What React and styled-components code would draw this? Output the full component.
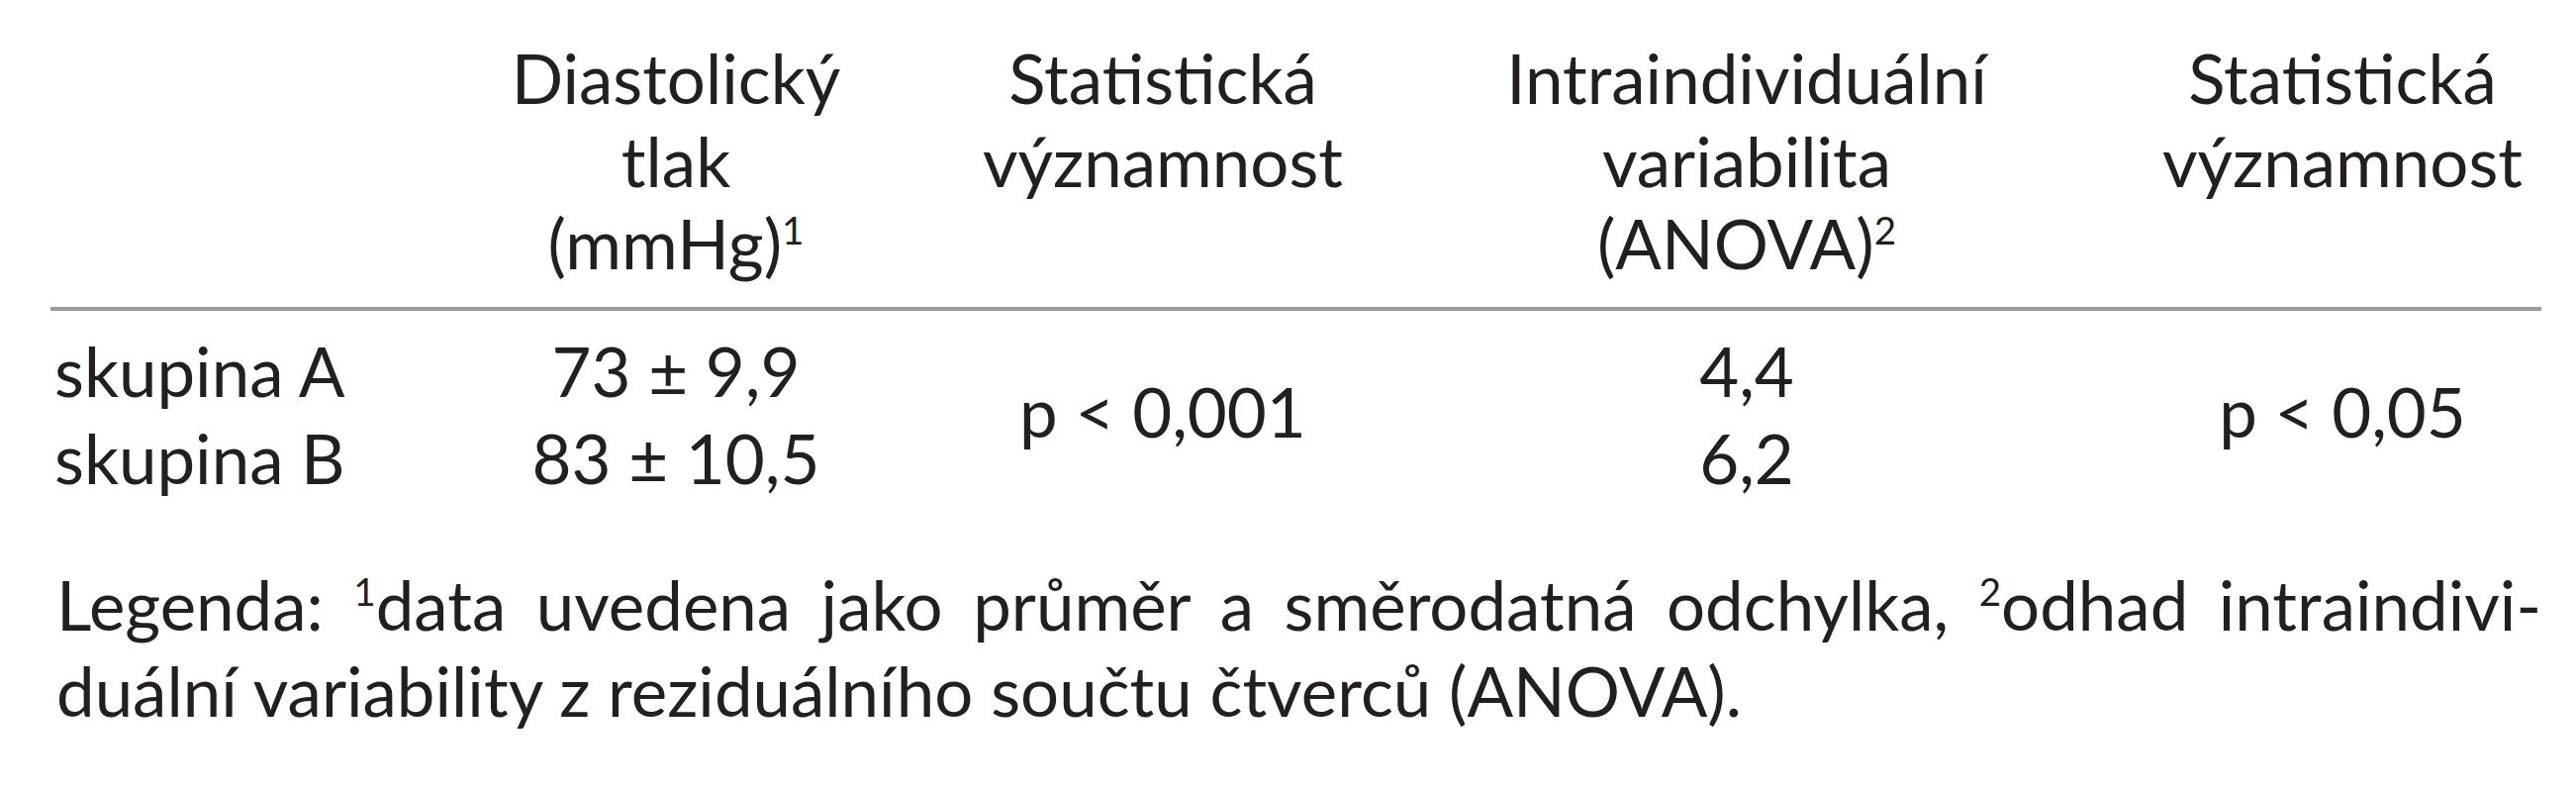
import React from "react";
import styled, { createGlobalStyle } from "styled-components";

const Global = createGlobalStyle`
  html, body { margin: 0; padding: 0; background: #ffffff; }
  body {
    font-family: Lato, "Open Sans", "Noto Sans", sans-serif;
    color: #231f20;
  }
`;

const Page = styled.div`
  width: 2603px;
  height: 800px;
  box-sizing: border-box;
  padding: 37px 0 0 51px;
  background: #ffffff;
  font-size: 69px;
`;

const Table = styled.div`
  display: grid;
  width: 2517px;
  grid-template-columns: 329px 606px 378px 802px 402px;
  grid-template-rows: auto auto 88px 88px;
`;

const HeadCell = styled.div`
  grid-row: 1;
  grid-column: ${(p) => p.$col};
  align-self: start;
  text-align: center;
  line-height: 83.5px;
  padding-bottom: 22px;
  white-space: nowrap;
`;

const Rule = styled.div`
  grid-row: 2;
  grid-column: 1 / -1;
  height: 4px;
  background: #9a9a9a;
  margin-bottom: 17px;
`;

const Cell = styled.div`
  grid-column: ${(p) => p.$col};
  grid-row: ${(p) => (p.$span ? "3 / span 2" : p.$row)};
  line-height: 88px;
  white-space: nowrap;
  text-align: ${(p) => (p.$left ? "left" : "center")};
  padding-left: ${(p) => (p.$left ? "4px" : "0")};
  align-self: center;
  transform: ${(p) => (p.$span ? "translateY(-3px)" : "none")};
`;

const Sup = styled.sup`
  font-size: 0.56em;
  line-height: 0;
  vertical-align: 25px;
`;

const Legend = styled.div`
  margin: 60px 0 0 6px;
  width: 2511px;
  line-height: 87px;
`;

const LegendLine = styled.div`
  white-space: nowrap;
  text-align: ${(p) => (p.$justify ? "justify" : "left")};
  text-align-last: ${(p) => (p.$justify ? "justify" : "left")};
`;

export default function App() {
  return (
    <>
      <Global />
      <Page>
        <Table>
          <HeadCell $col={2}>
            Diastolický
            <br />
            tlak
            <br />
            (mmHg)<Sup>1</Sup>
          </HeadCell>
          <HeadCell $col={3}>
            Statistická
            <br />
            významnost
          </HeadCell>
          <HeadCell $col={4}>
            Intraindividuální
            <br />
            variabilita
            <br />
            (ANOVA)<Sup>2</Sup>
          </HeadCell>
          <HeadCell $col={5}>
            Statistická
            <br />
            významnost
          </HeadCell>
          <Rule />
          <Cell $left $col={1} $row={3}>skupina A</Cell>
          <Cell $col={2} $row={3}>73 ± 9,9</Cell>
          <Cell $col={3} $span>p &lt; 0,001</Cell>
          <Cell $col={4} $row={3}>4,4</Cell>
          <Cell $col={5} $span>p &lt; 0,05</Cell>
          <Cell $left $col={1} $row={4}>skupina B</Cell>
          <Cell $col={2} $row={4}>83 ± 10,5</Cell>
          <Cell $col={4} $row={4}>6,2</Cell>
        </Table>
        <Legend>
          <LegendLine $justify>
            Legenda: <Sup>1</Sup>data uvedena jako průměr a směrodatná odchylka, <Sup>2</Sup>odhad intraindivi-
          </LegendLine>
          <LegendLine>duální variability z reziduálního součtu čtverců (ANOVA).</LegendLine>
        </Legend>
      </Page>
    </>
  );
}
